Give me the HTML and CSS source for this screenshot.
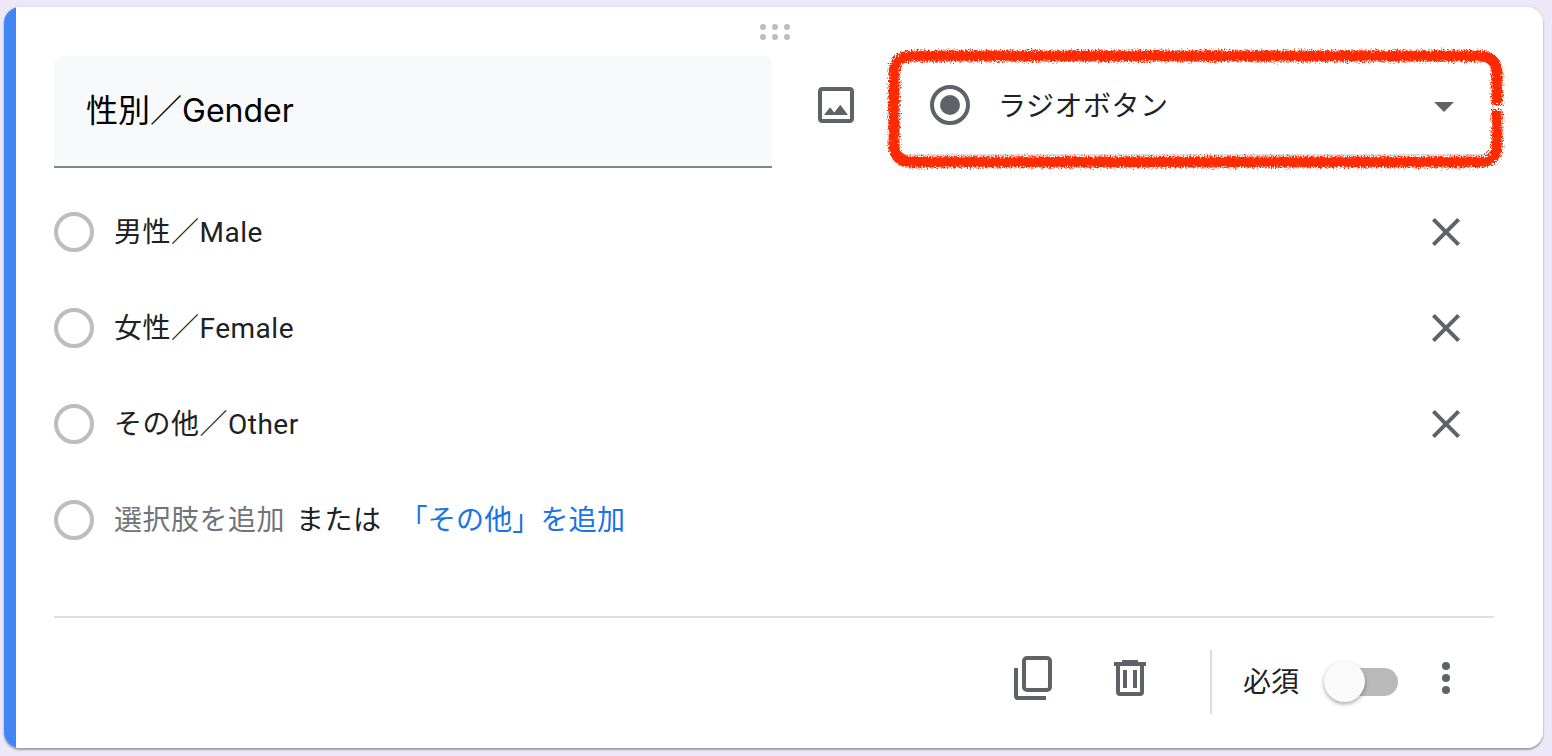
FILE: index.html
```html
<!DOCTYPE html>
<html lang="ja">
<head>
    <meta charset="UTF-8">
    <title>性別／Gender</title>
    <link rel="stylesheet" href="styles.css">
</head>
<body>
    <div class="card">
        <div class="drag-handle">
            <div class="drag-dots"><i></i><i></i><i></i><i></i><i></i><i></i></div>
        </div>

        <div class="question-head">
            <div class="question-title">性別／Gender</div>
            <svg class="icon image-btn" viewBox="0 0 24 24"><path d="M19 5v14H5V5h14m0-2H5c-1.1 0-2 .9-2 2v14c0 1.1.9 2 2 2h14c1.1 0 2-.9 2-2V5c0-1.1-.9-2-2-2zm-4.86 8.86l-3 3.87L9 13.14 6 17h12l-3.86-5.14z"/></svg>
            <div class="type-select">
                <span class="radio radio-on"></span>
                <span class="type-label">ラジオボタン</span>
                <span class="type-arrow"></span>
                <!-- red marker drawn over the dropdown -->
                <svg class="scribble" viewBox="0 0 632 134">
                    <defs>
                        <filter id="rough" x="-5%" y="-20%" width="110%" height="140%">
                            <feTurbulence type="fractalNoise" baseFrequency="0.7" numOctaves="3" seed="4"/>
                            <feDisplacementMap in="SourceGraphic" scale="8"/>
                        </filter>
                    </defs>
                    <path d="M617 63V32Q617 14 599 14H32Q14 14 14 32V102Q14 120 32 120H599Q617 120 617 102V68"/>
                </svg>
            </div>
        </div>

        <div class="options">
            <div class="option">
                <span class="radio"></span>
                <span class="option-text option-label">男性／Male</span>
                <svg class="icon" viewBox="0 0 24 24"><path d="M19 6.41L17.59 5 12 10.59 6.41 5 5 6.41 10.59 12 5 17.59 6.41 19 12 13.41 17.59 19 19 17.59 13.41 12z"/></svg>
            </div>
            <div class="option">
                <span class="radio"></span>
                <span class="option-text option-label">女性／Female</span>
                <svg class="icon" viewBox="0 0 24 24"><path d="M19 6.41L17.59 5 12 10.59 6.41 5 5 6.41 10.59 12 5 17.59 6.41 19 12 13.41 17.59 19 19 17.59 13.41 12z"/></svg>
            </div>
            <div class="option">
                <span class="radio"></span>
                <span class="option-text option-label">その他／Other</span>
                <svg class="icon" viewBox="0 0 24 24"><path d="M19 6.41L17.59 5 12 10.59 6.41 5 5 6.41 10.59 12 5 17.59 6.41 19 12 13.41 17.59 19 19 17.59 13.41 12z"/></svg>
            </div>
            <div class="option">
                <span class="radio"></span>
                <span class="option-text add-option">選択肢を追加</span>
                <span class="option-text add-or">または</span>
                <span class="option-text add-other">「その他」を追加</span>
            </div>
        </div>

        <div class="question-foot">
            <svg class="icon foot-icon" viewBox="0 0 48 48">
                <path class="line" d="M8 14V42Q8 44 10 44H38"/>
                <rect class="line" x="16" y="4" width="26" height="32" rx="3"/>
            </svg>
            <svg class="icon foot-icon trash" viewBox="0 0 48 48">
                <path d="M16 6h16v2h8v4H8V8h8z"/>
                <path class="line" d="M12 12V38Q12 40 14 40H34Q36 40 36 38V12"/>
                <path d="M17 16h4v18h-4zM27 16h4v18h-4z"/>
            </svg>
            <span class="foot-divider"></span>
            <span class="required-label">必須</span>
            <span class="toggle"><span class="toggle-thumb"></span></span>
            <svg class="icon foot-icon more" viewBox="0 0 48 48">
                <circle cx="24" cy="12" r="4"/>
                <circle cx="24" cy="24" r="4"/>
                <circle cx="24" cy="36" r="4"/>
            </svg>
        </div>
    </div>
</body>
</html>
```

FILE: styles.css
```css
html, body {
    height: 100%;
}
body {
    margin: 0;
    padding: 7px 9px 8px 4px;
    box-sizing: border-box;
    overflow: hidden;
    background-color: #ede8f7;
    font-family: Roboto, "Noto Sans CJK JP", sans-serif;
    color: #202124;
}
.card {
    height: 741px;
    box-sizing: border-box;
    padding: 0 49px 0 50px;
    background: linear-gradient(to right, #4285f4 12px, white 12px);
    border-radius: 16px;
    box-shadow: 0 2px 2px rgba(0,0,0,0.3), 0 0 3px rgba(0,0,0,0.12);
}
.icon {
    display: block;
    flex: none;
    width: 48px;
    height: 48px;
    fill: #5f6368;
}
.icon .line {
    fill: none;
    stroke: #5f6368;
    stroke-width: 4;
}

.drag-handle {
    display: flex;
    justify-content: center;
    height: 49px;
    box-sizing: border-box;
    padding: 17px 0 0 2px;
}
.drag-dots {
    display: grid;
    grid-template-columns: repeat(3, 6px);
    gap: 4px 6px;
    align-content: start;
}
.drag-dots i {
    width: 6px;
    height: 6px;
    border-radius: 50%;
    background-color: #bdbdbd;
}

.question-head {
    display: flex;
    align-items: flex-start;
}
.question-title {
    width: 718px;
    height: 112px;
    box-sizing: border-box;
    padding-left: 32px;
    line-height: 110px;
    font-family: Inter, "Noto Sans CJK JP", sans-serif;
    font-size: 32px;
    color: #000;
    background-color: #f8f9fa;
    border-bottom: 2px solid #80868b;
    border-radius: 8px 8px 0 0;
}
.image-btn {
    margin: 25px 37px 0 40px;
}
.type-select {
    position: relative;
    flex: 1;
    display: flex;
    align-items: center;
    height: 100px;
    box-sizing: border-box;
    padding: 0 38px 0 31px;
    border: 2px solid #dadce0;
    border-radius: 8px;
}
.type-select .radio {
    margin-bottom: 2px;
}
.type-label {
    flex: 1;
    margin: 0 0 4px 28px;
    font-size: 28px;
    letter-spacing: 0.5px;
}
.type-arrow {
    width: 0;
    height: 0;
    margin-top: 2px;
    border-left: 10px solid transparent;
    border-right: 10px solid transparent;
    border-top: 10px solid #5f6368;
}
.scribble {
    position: absolute;
    left: -19px;
    top: -16px;
    width: 632px;
    height: 134px;
    overflow: visible;
}
.scribble path {
    fill: none;
    stroke: #ff2a00;
    stroke-width: 11;
    filter: url(#rough);
}

.radio {
    flex: none;
    display: flex;
    align-items: center;
    justify-content: center;
    width: 40px;
    height: 40px;
    box-sizing: border-box;
    border: 4px solid #bdbdbd;
    border-radius: 50%;
}
.radio-on {
    border-color: #5f6368;
}
.radio-on::after {
    content: "";
    width: 20px;
    height: 20px;
    border-radius: 50%;
    background-color: #5f6368;
}

.options {
    margin-top: 16px;
}
.option {
    display: flex;
    align-items: center;
    height: 96px;
    padding-right: 24px;
    font-size: 28px;
    letter-spacing: 0.5px;
}
.option-text {
    margin-bottom: 4px;
}
.option-label {
    flex: 1;
    margin-left: 20px;
}
.add-option {
    margin-left: 20px;
    color: #70757a;
}
.add-or {
    margin-left: 11px;
}
.add-other {
    margin-left: 18px;
    letter-spacing: 0.2px;
    color: #1a73e8;
}

.question-foot {
    display: flex;
    justify-content: flex-end;
    align-items: center;
    height: 64px;
    margin-top: 48px;
    padding: 32px 24px 0 0;
    border-top: 2px solid #dfdfe6;
}
.foot-icon {
    margin-bottom: 8px;
}
.trash {
    margin-left: 50px;
}
.foot-divider {
    width: 2px;
    height: 64px;
    margin-left: 56px;
    background-color: #dadce0;
}
.required-label {
    margin: 0 0 5px 31px;
    font-size: 28px;
}
.toggle {
    position: relative;
    width: 68px;
    height: 28px;
    margin-left: 31px;
    border-radius: 14px;
    background-color: #b9b9b9;
}
.toggle-thumb {
    position: absolute;
    left: -6px;
    top: -7px;
    width: 41px;
    height: 41px;
    border-radius: 50%;
    background-color: #fafafa;
    box-shadow: 0 2px 4px rgba(0,0,0,0.35);
}
.more {
    margin-left: 24px;
}
```
